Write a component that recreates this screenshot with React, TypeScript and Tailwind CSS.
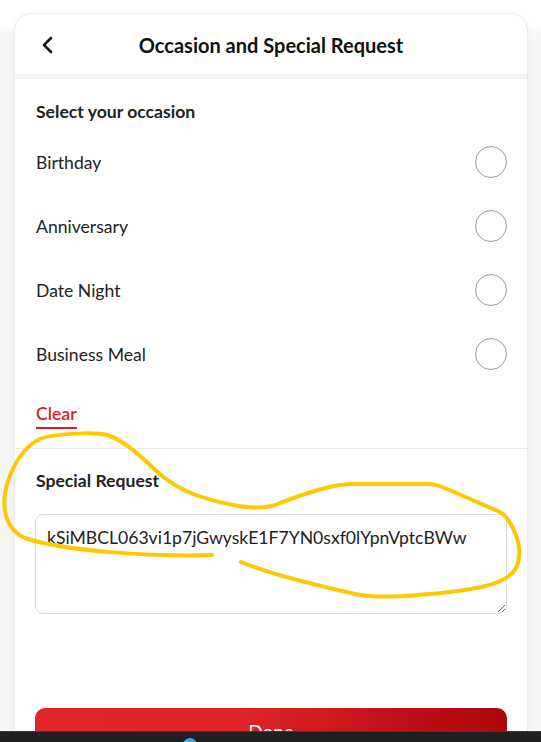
import React from 'react'

const occasions = ['Birthday', 'Anniversary', 'Date Night', 'Business Meal']

export default function App() {
  return (
    <div className="relative h-[742px] overflow-hidden bg-[linear-gradient(to_bottom,#ffffff_26px,#f6f6f6_34px)] pt-[13px] font-['Lato','Noto_Sans',sans-serif] text-[#222]">
      <div className="ml-[14px] mr-[13px] h-[800px] rounded-t-[18px] border border-[#ececec] bg-white shadow-[0_0_6px_rgba(0,0,0,0.04)]">
        <div className="relative flex h-[60px] items-center justify-center">
          <svg className="absolute left-[25px] top-[21px]" width="16" height="20" viewBox="0 0 16 20" fill="none">
            <path d="M11 3 L4 10 L11 17" stroke="#111" strokeWidth="2.6" strokeLinecap="round" strokeLinejoin="round" />
          </svg>
          <h1 className="mt-[1px] text-[20px] font-bold text-[#111]">Occasion and Special Request</h1>
        </div>
        <div className="h-[5px] bg-[#f4f4f4]" />

        <div className="pl-[21px] pr-[20px] pt-[21px]">
          <h2 className="text-[17.6px] font-bold leading-[24px]">Select your occasion</h2>
          <div className="mt-[6px] flex flex-col">
            {occasions.map((o) => (
              <label key={o} className="flex h-[64px] items-center justify-between">
                <span className="pt-[1px] text-[17.6px] leading-[24px]">{o}</span>
                <span className="h-[32px] w-[32px] rounded-full border border-[#9a9a9a]" />
              </label>
            ))}
          </div>
          <div className="mt-[16px] mb-[19px]">
            <span className="inline-block border-b-2 border-[#dc1f26] pb-[1px] text-[17.6px] font-semibold leading-[24px] text-[#dc1f26]">Clear</span>
          </div>
        </div>
        <div className="h-px bg-[#ececec]" />

        <div className="pl-[20px] pr-[20px] pt-[20px]">
          <h2 className="pl-[1px] text-[17.6px] font-bold leading-[24px]">Special Request</h2>
          <textarea
            className="mt-[21px] block h-[100px] w-full resize-y rounded-[8px] border border-[#dcdcdc] px-[11px] pt-[11px] text-[17.6px] leading-[24px] text-[#222] outline-none"
            defaultValue="kSiMBCL063vi1p7jGwyskE1F7YN0sxf0lYpnVptcBWw"
          />
          <button className="mt-[94px] h-[48px] w-full rounded-[10px] bg-[linear-gradient(100deg,#e0262c_0%,#dd2329_45%,#a9040b_100%)] text-[19px] text-white">
            Done
          </button>
        </div>
      </div>

      <svg className="pointer-events-none absolute left-0 top-0" width="541" height="742" viewBox="0 0 541 742" fill="none">
        <path
          d="M212 555 C155 557 62 551 25 538 C5 529 0 506 8 481 C14 463 25 446 40 439 C56 433 97 432 107 435 C120 439 138 453 153 468 C174 488 195 498 238 506 C258 509 270 508 280 503 C310 492 330 485 350 484 L428 484 C438 484 444 488 454 492 L500 512 C510 518 525 545 517 566 C511 580 492 587 450 592 C410 596 380 599 355 594 C330 588 280 578 241 562"
          stroke="#ffc800"
          strokeWidth="4"
          strokeLinecap="round"
          strokeLinejoin="round"
        />
      </svg>

      <div className="absolute bottom-0 left-0 h-[11px] w-full border-t border-[#3a3a3a] bg-[#202020]">
        <div className="absolute left-[183px] top-[6px] h-[14px] w-[14px] rounded-full bg-[#3ba3e8]" />
      </div>
    </div>
  )
}
